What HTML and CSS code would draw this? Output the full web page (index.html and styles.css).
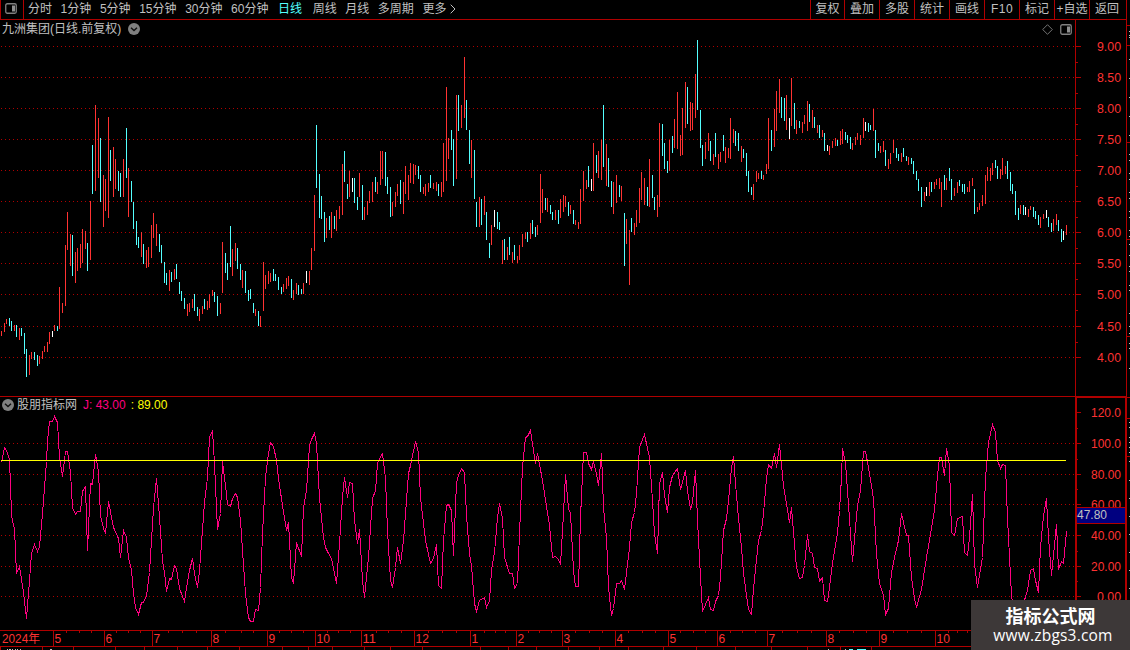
FILE: index.html
```
<!DOCTYPE html>
<html lang="zh-CN">
<head>
    <meta charset="UTF-8">
    <title>九洲集团 日线</title>
    <link rel="stylesheet" href="styles.css">
</head>
<body>
    <div class="app">
        <div class="main">
            <div class="toolbar">
                <div class="layout-btn">
                    <svg width="12" height="11" viewBox="0 0 12 11"><rect x=".75" y=".75" width="10.5" height="9.5" rx="1.5" fill="none" stroke="#808080" stroke-width="1.3"/><rect x="7" y="2.5" width="3" height="6" fill="#909090"/></svg>
                </div>
                <div class="periods">
                    <span>分时</span>
                    <span>1分钟</span>
                    <span>5分钟</span>
                    <span>15分钟</span>
                    <span>30分钟</span>
                    <span>60分钟</span>
                    <span class="active">日线</span>
                    <span>周线</span>
                    <span>月线</span>
                    <span>多周期</span>
                    <span class="more">更多<svg width="6" height="10" viewBox="0 0 6 10"><path d="M.7 .7 L5 5 L.7 9.3" fill="none" stroke="#c0c0c0"/></svg></span>
                </div>
                <div class="tools">
                    <span>复权</span>
                    <span>叠加</span>
                    <span>多股</span>
                    <span>统计</span>
                    <span>画线</span>
                    <span class="wide">F10</span>
                    <span>标记</span>
                    <span>+自选</span>
                    <span>返回</span>
                </div>
            </div>

            <div class="panel price">
                <div class="plot">
                    <div class="title">
                        <span>九洲集团(日线.前复权)</span>
                        <svg class="drop" width="12" height="12" viewBox="0 0 12 12"><circle cx="6" cy="6" r="6" fill="#808080"/><path d="M3 4.8 L6 7.6 L9 4.8" fill="none" stroke="#101010" stroke-width="1.4"/></svg>
                        <span class="corner">
                            <svg width="11" height="11" viewBox="0 0 11 11"><path d="M5.5 .7 L10.3 5.5 L5.5 10.3 L.7 5.5 Z" fill="none" stroke="#808080" stroke-width=".9"/></svg>
                            <svg width="12" height="11" viewBox="0 0 12 11"><rect x=".75" y=".75" width="10.5" height="9.5" rx="1.5" fill="none" stroke="#808080" stroke-width="1.3"/><rect x="7" y="2.5" width="3" height="6" fill="#909090"/></svg>
                        </span>
                    </div>
                    <svg id="priceChart" width="1075" height="356" viewBox="0 40 1075 356"></svg>
                </div>
                <svg id="priceAxis" width="51" height="376" viewBox="1075 20 51 376"></svg>
            </div>

            <div class="panel indicator">
                <div class="plot">
                    <div class="title">
                        <svg class="drop" width="12" height="12" viewBox="0 0 12 12"><circle cx="6" cy="6" r="6" fill="#808080"/><path d="M3 4.8 L6 7.6 L9 4.8" fill="none" stroke="#101010" stroke-width="1.4"/></svg>
                        <span>股朋指标网</span>
                        <span class="j">J: 43.00</span>
                        <span class="ref">: 89.00</span>
                    </div>
                    <svg id="jChart" width="1075" height="215" viewBox="0 415 1075 215"></svg>
                </div>
                <svg id="jAxis" width="51" height="233" viewBox="1075 397 51 233"></svg>
            </div>

            <svg id="timeline" width="1126" height="20" viewBox="0 630 1126 20"></svg>
        </div>
        <svg id="side" width="4" height="650" viewBox="1126 0 4 650"></svg>
        <div class="watermark">
            <div class="name">指标公式网</div>
            <div class="url">www.zbgs3.com</div>
        </div>
    </div>
    <script src="chart.js"></script>
</body>
</html>
```
FILE: styles.css
```
body {
    margin: 0;
    background: #000;
    color: #c0c0c0;
    font: 12px/18px "Liberation Sans", "Noto Sans CJK SC", sans-serif;
    overflow: hidden;
}
svg {
    display: block;
    flex: none;
}
.app {
    position: relative;
    display: flex;
    width: 1130px;
    height: 650px;
    overflow: hidden;
}
.main {
    width: 1126px;
    display: flex;
    flex-direction: column;
}
.toolbar {
    display: flex;
    height: 19px;
    border-bottom: 1px solid #b00000;
    line-height: 19px;
    white-space: nowrap;
}
.layout-btn {
    box-sizing: border-box;
    width: 24px;
    padding: 3px 0 0 4px;
    border-left: 1px solid #b00000;
    border-right: 1px solid #b00000;
}
.periods {
    display: flex;
    gap: 8.6px;
    padding-left: 4px;
    width: 782px;
}
.periods .active {
    color: #54ffff;
    margin: 0 2px 0 1px;
}
.more {
    display: flex;
    align-items: center;
    gap: 4px;
    height: 18px;
}
.tools {
    display: grid;
    grid-template-columns: 34px repeat(8, 35px);
}
.tools span {
    border-left: 1px solid #b00000;
    text-align: center;
}
.tools .wide {
    letter-spacing: 0.5px;
}
.panel {
    display: flex;
}
.plot {
    width: 1075px;
}
.title {
    display: flex;
    align-items: center;
    height: 18px;
}
.price .title {
    box-sizing: border-box;
    height: 20px;
    padding: 0 0 2px 2px;
}
.price .drop {
    margin-left: 7px;
}
.corner {
    display: flex;
    gap: 7px;
    margin-left: auto;
    padding-right: 3px;
}
.indicator {
    border-top: 1px solid #b00000;
}
.indicator .title {
    padding-left: 2px;
    height: 18px;
    line-height: 17px;
}
.indicator .title .drop {
    margin: 0 3px 2px 0;
}
.indicator .title span {
    margin-top: -1px;
}
.indicator .title .j {
    color: #ff0080;
    margin-left: 6px;
}
.indicator .title .ref {
    color: #ffff00;
    margin-left: 5px;
}
.grid {
    stroke: #b00000;
    stroke-dasharray: 1 3;
}
.axis {
    fill: #b00000;
}
.label {
    fill: #ff3232;
    font-size: 12px;
}
.up {
    fill: #ff3232;
}
.down {
    fill: #54ffff;
}
.flat {
    fill: #fff;
}
.speck {
    fill: #c0c0c0;
}
.j-line {
    fill: none;
    stroke: #ff0080;
}
.ref-line {
    fill: #ffff00;
}
.mark {
    fill: #000080;
}
.mark-text {
    fill: #c0c0c0;
    font-size: 12px;
}
.watermark {
    position: absolute;
    right: 0;
    bottom: 0;
    width: 159px;
    height: 50px;
    background: #3d3838;
    color: #fff;
    text-align: center;
}
.watermark .name {
    font: bold 18px/20px "Noto Sans CJK SC", sans-serif;
    padding-top: 5px;
}
.watermark .url {
    font: 15.5px/20px "Open Sans", sans-serif;
    letter-spacing: 0.2px;
    padding-left: 5px;
}
```
FILE: chart.js
```
// x, high y, low y, type (r = up, c = down, w = flat)
var bars = `1 331 336 r,4 323 332 r,6 319 324 r,9 318 326 c,11 321 331 c,14 325 331 r,16 325 337 c,19 328 340 r,21 328 336 c,24 333 354 c,
26 349 377 c,29 355 375 r,31 352 359 r,34 352 360 c,37 355 366 c,39 356 364 r,42 351 359 r,44 346 352 r,47 342 352 r,49 332 344 r,
52 331 337 w,54 325 331 r,57 326 331 c,59 287 329 r,62 303 313 r,65 245 306 r,67 212 250 r,70 234 266 r,72 235 276 c,75 252 283 r,
77 248 271 r,80 244 268 r,82 229 263 r,85 231 249 r,87 243 271 c,90 201 260 r,92 145 194 c,95 105 191 r,98 118 178 r,100 138 202 c,
103 175 227 r,105 179 211 r,108 117 218 r,110 150 181 c,113 147 197 r,115 159 189 r,118 171 191 c,120 173 197 c,123 159 197 r,126 128 178 c,
128 168 217 r,131 181 202 c,133 202 229 c,136 221 245 c,138 237 248 c,141 232 257 r,143 244 264 c,146 250 268 r,148 247 267 r,151 225 258 r,
153 213 238 r,156 224 246 r,159 234 252 c,161 245 263 c,164 262 283 c,166 273 285 c,169 270 291 r,171 272 282 c,174 269 280 r,176 264 279 c,
179 282 294 c,181 291 301 c,184 298 309 c,187 304 316 r,189 303 312 r,192 299 308 r,194 294 311 c,197 307 316 c,199 309 321 r,202 306 314 r,
204 299 309 c,207 301 310 r,209 294 308 r,212 290 296 r,214 292 302 c,217 296 316 c,220 303 314 r,222 242 293 r,225 253 273 c,227 263 280 c,
230 226 267 c,232 249 276 r,235 243 261 r,237 248 269 c,240 264 280 c,242 270 288 r,245 271 293 c,248 290 301 c,250 289 299 c,253 303 313 c,
255 309 316 r,258 311 326 c,260 316 327 r,263 262 311 r,265 275 289 r,268 271 284 r,270 273 282 r,273 269 281 c,275 274 281 c,278 277 290 c,
281 287 294 c,283 284 292 r,286 278 289 r,288 276 286 r,291 279 298 c,293 290 300 r,296 283 294 r,298 285 295 c,301 289 294 c,303 283 294 r,
306 271 283 w,309 271 285 r,311 248 270 r,314 195 251 r,316 125 188 c,319 174 218 c,321 196 219 c,324 212 242 c,326 218 238 r,329 216 230 c,
331 212 238 r,334 216 229 c,336 210 231 r,339 206 219 r,342 164 215 r,344 151 182 c,347 184 199 c,349 171 197 r,352 178 192 w,354 178 203 c,
357 197 210 c,359 173 197 r,362 185 220 c,364 207 220 r,367 201 215 r,369 191 203 r,372 182 202 r,375 177 192 c,377 182 194 r,380 151 185 r,
382 151 179 r,385 152 186 c,387 177 194 c,390 187 217 c,392 202 216 r,395 192 207 r,397 184 196 r,400 180 204 c,403 182 214 r,405 166 194 r,
408 175 200 r,410 163 183 r,413 164 184 r,415 165 175 r,418 166 179 c,420 175 192 c,423 187 194 r,425 184 196 r,428 183 192 r,430 175 188 c,
433 183 189 r,436 182 191 r,438 184 196 c,441 182 197 r,443 143 192 r,446 87 181 r,448 138 159 r,451 130 150 c,453 139 186 c,456 95 179 r,
458 95 131 c,461 105 128 r,464 57 118 r,466 100 130 c,469 130 164 c,471 140 178 r,474 150 199 c,476 202 227 c,479 197 227 r,481 199 225 c,
484 196 215 r,486 212 240 c,489 243 258 c,491 225 245 r,494 210 227 w,497 212 229 c,499 222 230 c,502 240 264 r,504 239 260 c,507 247 260 r,
509 237 255 c,512 252 263 r,514 245 260 c,517 256 263 r,519 245 260 r,522 234 247 r,525 232 239 r,527 232 242 c,530 223 239 r,532 220 234 c,
535 227 237 c,537 225 235 r,540 174 223 r,542 189 213 r,545 198 210 c,547 198 212 r,550 205 214 c,552 212 220 c,555 210 220 r,558 210 224 c,
560 199 218 r,563 195 212 r,565 196 207 r,568 202 216 c,570 205 214 r,573 210 224 c,575 220 225 r,578 222 229 r,580 189 224 r,583 171 201 r,
586 180 189 r,588 166 187 c,591 179 191 w,593 143 191 r,596 155 173 c,598 151 178 r,601 140 180 r,603 105 167 c,606 144 186 r,608 158 187 c,
611 181 207 c,613 182 214 r,616 175 203 r,619 185 197 c,621 186 201 r,624 213 266 c,626 219 244 r,629 230 285 r,631 218 232 c,634 223 235 r,
636 210 227 r,639 188 223 r,641 172 200 r,644 178 205 r,647 187 206 c,649 159 207 r,652 175 198 c,654 197 210 c,657 195 217 r,659 123 207 r,
662 124 156 c,664 143 169 c,667 161 173 c,669 140 171 r,672 136 153 c,674 119 148 r,677 92 149 r,680 135 156 r,682 108 155 r,685 82 128 r,
687 87 124 c,690 102 131 r,692 103 130 r,695 74 118 r,697 40 110 c,700 110 148 c,702 145 166 c,705 142 159 r,708 133 151 r,710 141 161 c,
713 154 165 r,715 133 157 c,718 154 169 r,720 152 162 r,723 135 151 c,725 147 163 r,728 148 158 r,730 118 159 r,733 129 143 r,735 131 146 c,
738 133 151 c,741 146 162 r,743 149 158 c,746 153 176 c,748 171 192 c,751 187 195 c,753 184 200 r,756 171 182 r,758 173 179 r,761 171 179 c,
763 175 180 r,766 164 174 r,768 118 169 r,771 130 151 c,774 109 147 r,776 91 131 r,779 79 113 r,781 97 118 c,784 98 121 c,786 95 130 r,
789 118 139 w,791 78 126 r,794 103 129 c,796 120 134 r,799 121 128 c,802 122 133 r,804 115 124 r,807 101 131 r,809 104 122 c,812 110 128 r,
814 117 128 c,817 125 133 r,819 125 138 c,822 130 137 r,824 133 151 c,827 145 151 w,829 146 155 r,832 141 148 r,835 138 146 r,837 140 146 c,
840 131 145 r,842 129 144 r,845 132 140 c,847 135 143 c,850 137 149 c,852 143 150 r,855 137 145 r,857 133 140 r,860 135 145 r,863 118 138 r,
865 122 131 w,868 123 132 c,870 125 130 c,873 109 131 r,875 130 158 c,878 143 151 c,880 146 153 r,883 141 152 r,885 150 166 c,888 159 169 r,
890 153 164 r,893 140 153 r,896 148 158 c,898 154 161 c,901 153 162 r,903 148 157 c,906 156 161 c,908 157 165 r,911 158 164 c,913 161 174 c,
916 171 180 c,918 179 191 c,921 187 207 c,924 192 201 r,926 187 196 w,929 182 196 r,931 182 192 c,934 182 189 r,936 179 185 r,939 178 189 r,
941 182 207 r,944 175 190 c,946 178 190 r,949 168 181 c,951 179 200 c,954 188 196 r,957 182 193 r,959 180 186 c,962 184 192 c,964 184 194 c,
967 187 192 r,969 181 192 r,972 178 186 r,974 189 214 c,977 207 212 r,979 203 210 r,982 195 206 r,985 175 204 r,987 167 181 r,990 168 181 r,
992 163 175 r,995 160 168 c,997 166 179 c,1000 169 179 r,1002 158 175 r,1005 166 174 r,1007 161 179 c,1010 172 191 c,1012 184 194 c,1015 191 215 c,
1018 208 220 c,1020 205 214 r,1023 205 215 c,1025 207 215 w,1028 209 217 r,1030 206 210 r,1033 207 217 c,1035 211 219 c,1038 215 225 c,1040 217 228 r,
1043 214 219 r,1046 210 218 w,1048 217 227 c,1051 223 232 c,1053 219 231 r,1056 214 225 r,1058 220 231 c,1061 229 242 c,1063 231 240 w,1066 225 235 r`;

var jPoints = `1,462 4,447 6,450 9,459 11,513 12,521 14,528 16,573 19,566 23,592 26,618 29,580 31,553 34,544 37,551 39,546 42,513 44,487 46,461 47,440 49,421
52,421 54,416 57,422 59,457 62,476 65,451 67,451 70,472 72,507 75,514 77,511 80,511 82,491 85,486 87,550 90,483 92,484 95,454 98,471 100,515
103,528 105,533 108,501 113,527 118,538 120,557 123,530 126,537 128,557 131,570 133,593 135,607 138,614 141,602 143,602 146,595 149,572 151,540
153,507 156,478 159,517 162,560 164,572 166,591 169,578 171,579 174,565 176,568 179,588 184,601 186,587 189,570 192,558 194,573 197,587 199,570
201,543 204,502 207,477 209,437 212,430 214,463 217,529 220,513 222,461 225,485 227,504 230,506 232,498 235,493 237,497 240,520 242,550 245,593
248,617 250,621 253,621 255,609 258,610 260,587 262,533 265,477 267,460 270,442 273,446 276,460 278,478 282,505 286,530 288,522 291,577 293,583
296,542 301,556 303,507 306,490 309,445 311,439 314,433 316,443 319,497 323,537 325,547 328,553 331,558 336,583 339,543 342,497 344,477 347,497
349,482 352,483 354,520 357,543 359,529 362,580 364,597 368,557 372,498 375,490 377,463 379,458 382,453 385,478 387,530 390,580 392,587 395,567
397,547 400,563 403,540 408,473 410,465 415,441 418,452 420,497 425,540 430,563 433,558 436,544 438,585 441,588 443,540 446,505 448,504 451,510
453,555 456,482 458,475 461,468 464,472 466,515 469,553 471,565 474,603 476,611 479,600 484,597 486,607 489,600 491,570 494,552 497,517 499,503
502,518 504,557 509,573 512,573 514,588 517,583 519,533 522,467 525,437 527,436 530,430 533,450 535,463 537,453 542,480 549,525 552,557 555,556
558,559 560,564 563,513 565,474 568,508 570,513 573,570 575,586 578,586 580,517 583,452 586,452 588,463 591,469 593,461 596,473 598,485 601,453
603,507 606,537 608,587 611,615 613,608 616,583 619,583 621,580 624,589 629,547 631,522 634,512 636,493 639,447 644,434 649,457 652,500 654,533
657,553 659,483 662,472 664,495 667,512 669,487 672,475 677,468 680,489 685,470 687,490 690,509 692,502 695,470 697,520 700,577 702,611 708,597
710,609 713,610 715,601 718,595 720,577 723,530 726,518 728,500 731,467 733,456 735,483 738,518 741,547 743,573 748,609 751,614 753,588 758,540
761,530 763,513 766,478 768,464 771,468 774,453 776,467 779,444 783,485 789,522 791,507 796,567 799,578 802,577 804,565 807,534 809,551 812,553
814,567 817,568 819,581 822,577 824,600 827,601 829,587 832,563 837,532 839,510 841,477 842,448 845,462 847,490 850,533 852,561 857,505 860,490
863,451 865,451 868,467 873,498 876,553 879,583 883,595 885,614 888,608 891,572 894,557 898,540 901,513 906,535 908,535 911,577 914,598 916,607
921,589 926,557 934,510 937,475 939,457 941,457 944,475 946,448 949,465 951,532 954,535 957,518 962,516 964,552 967,555 969,537 972,494 974,563
977,587 982,557 985,478 988,442 992,424 995,432 997,460 1000,468 1002,464 1005,465 1007,518 1011,595 1013,609 1019,612 1023,603 1027,590 1030,570
1033,568 1035,580 1038,592 1040,547 1043,515 1046,498 1048,537 1051,575 1056,524 1058,569 1061,561 1063,563 1066,531`;

function rect(x, y, w, h, cls) {
    return `<rect x="${x}" y="${y}" width="${w}" height="${h}" class="${cls}" shape-rendering="crispEdges"/>`;
}

function label(text, x, y, width, cls = 'label') {
    return `<text x="${x}" y="${y}" textLength="${width}" lengthAdjust="spacingAndGlyphs" class="${cls}">${text}</text>`;
}

function grid(rows) {
    return rows.map(y => `<line x1="1" x2="1075" y1="${y + .5}" y2="${y + .5}" class="grid" shape-rendering="crispEdges"/>`).join('');
}

function draw(id, html) {
    document.getElementById(id).innerHTML = html;
}

// price
var priceRows = [46, 77, 108, 139, 170, 201, 232, 263, 294, 326, 357];
var types = { r: 'up', c: 'down', w: 'flat' };
draw('priceChart', grid(priceRows) + bars.split(',').map(b => {
    var [x, top, bottom, type] = b.trim().split(' ');
    return rect(x, top, 1, bottom - top, types[type]);
}).join(''));

var html = rect(1075, 20, 1, 376, 'axis');
priceRows.forEach((y, i) => {
    html += rect(1076, y, 5, 1, 'axis') + label((9 - i * 0.5).toFixed(2), 1097, y + 5, 24);
});
[62, 93, 124, 155, 186, 217, 248, 279, 310, 342].forEach(y => html += rect(1076, y, 2, 1, 'axis'));
draw('priceAxis', html);

// indicator
var jRows = [412, 443, 474, 504, 535, 566, 596];
draw('jChart', grid(jRows.slice(1)) +
    `<polyline points="${jPoints}" transform="translate(.5 .5)" class="j-line" shape-rendering="crispEdges"/>` +
    rect(1, 460, 1065, 1, 'ref-line'));

html = rect(1075, 397, 2, 233, 'axis') + rect(1075, 397, 51, 1, 'axis') + rect(1125, 397, 1, 233, 'axis');
['120.0', '100.0', '80.00', '60.00', '40.00', '20.00', '0.00'].forEach((t, i) => {
    var w = t.length === 5 ? 30 : 24;
    html += rect(1077, jRows[i], 4, 1, 'axis') + label(t, 1121 - w, jRows[i] + 5, w);
});
[428, 459, 489, 551, 581].forEach(y => html += rect(1077, y, 1, 1, 'axis'));
html += rect(1077, 507, 48, 17, 'mark') + rect(1077, 507, 48, 1, 'axis') + rect(1077, 523, 48, 1, 'axis') + label('47.80', 1077, 519, 30, 'mark-text');
draw('jAxis', html);

// timeline
var months = [[53, '5'], [104, '6'], [152, '7'], [211, '8'], [267, '9'], [315, '10'], [361, '11'], [414, '12'], [470, '1'], [516, '2'],
    [562, '3'], [615, '4'], [668, '5'], [717, '6'], [767, '7'], [826, '8'], [879, '9'], [935, '10']];
html = rect(0, 630, 1126, 1, 'axis') + rect(0, 646, 1126, 1, 'axis') + label('2024年', 2, 643, 38);
months.forEach(([x, m]) => html += rect(x, 631, 1, 15, 'axis') + label(m, x + 1.5, 643, m.length * 6.7));
[66, 79, 91, 116, 128, 140, 168, 182, 196, 225, 241, 253, 279, 291, 303, 327, 338, 350, 376, 388, 401, 428, 442, 456, 484, 495, 505, 528, 539, 551,
    575, 589, 602, 628, 642, 655, 680, 693, 705, 730, 742, 755, 782, 797, 811, 839, 853, 866, 893, 907, 921, 948, 957, 967
].forEach(x => html += rect(x, 631, 1, 2, 'axis'));
[0, 42, 73, 115, 144, 177, 207, 239, 282, 308, 332, 364, 390, 422, 480, 508, 536, 568, 599, 628, 663, 696, 735, 771, 807, 840, 871
].forEach(x => html += rect(x, 647, 1, 3, 'axis'));
// tops of the row below
[[7, 1], [9, 2], [12, 1], [15, 1], [17, 1], [20, 1], [50, 2], [828, 1], [845, 1]].forEach(([x, w]) => html += rect(x, 649, w, 1, 'speck'));
[[849, 4], [857, 9]].forEach(([x, w]) => html += rect(x, 649, w, 1, 'down'));
draw('timeline', html);

// right edge
html = rect(1126, 0, 1, 650, 'axis');
[25, 45, 142, 239, 336, 397, 418, 456].forEach(y => html += rect(1127, y, 3, 1, 'axis'));
[31, 35, 37, 59, 78, 97, 116, 135, 154, 160, 173, 179, 192, 198, 211, 217, 230, 236, 244, 255, 266, 271, 285, 290, 313, 326, 333, 343, 348, 368,
    422, 427, 437, 442, 447, 452, 461, 480, 498, 516, 534, 552, 570, 588
].forEach(y => html += rect(1129, y, 1, 1, 'speck'));
draw('side', html);
```
